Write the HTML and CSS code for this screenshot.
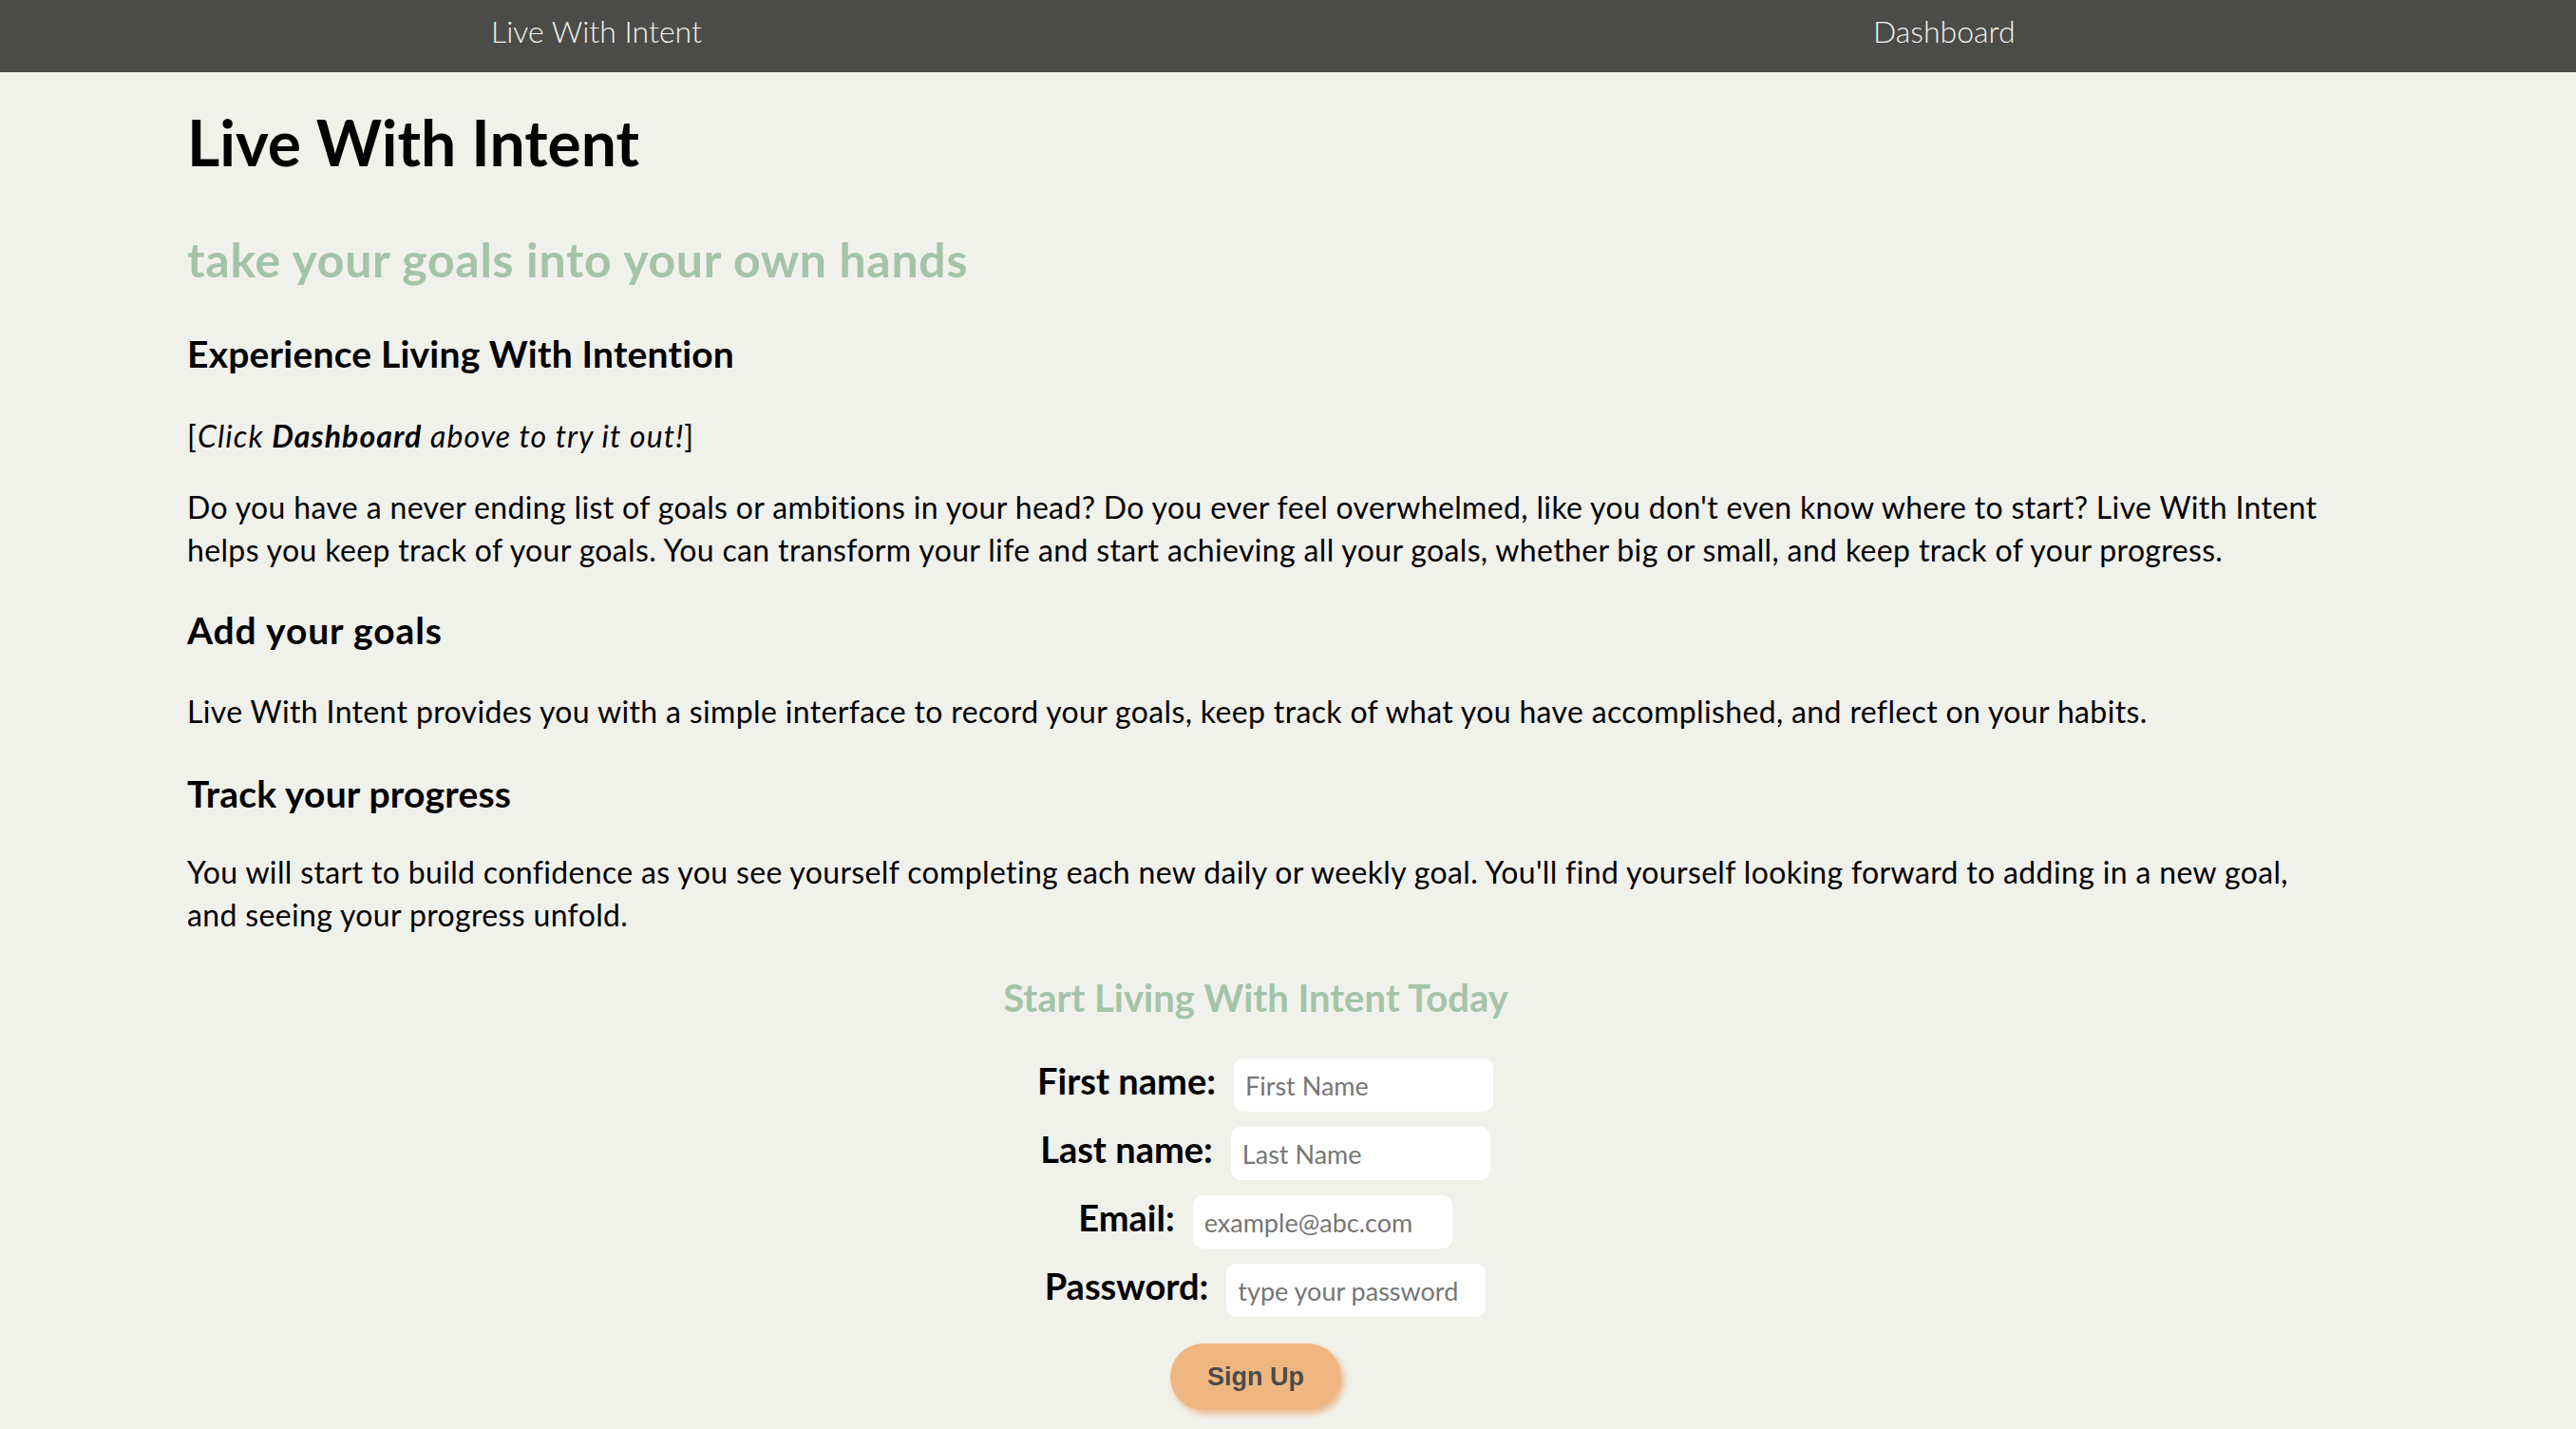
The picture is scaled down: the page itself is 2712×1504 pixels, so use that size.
FILE: index.html
```html
<!DOCTYPE html>
<html lang="en">
<head>
<meta charset="utf-8">
<title>Live With Intent</title>
<link rel="stylesheet" href="styles.css">
</head>
<body>
<nav class="topnav">
  <a class="nav-link nav-brand" href="#">Live With Intent</a>
  <a class="nav-link" href="#">Dashboard</a>
</nav>
<main class="page">
  <h1 class="title">Live With Intent</h1>
  <h2 class="tagline">take your goals into your own hands</h2>
  <h3 class="section-h h-experience">Experience Living With Intention</h3>
  <p class="text note">[<em>Click <strong>Dashboard</strong> above to try it out!</em>]</p>
  <p class="text p-intro">Do you have a never ending list of goals or ambitions in your head? Do you ever feel overwhelmed, like you don't even know where to start? Live With Intent helps you keep track of your goals. You can transform your life and start achieving all your goals, whether big or small, and keep track of your progress.</p>
  <h3 class="section-h h-add">Add your goals</h3>
  <p class="text p-add">Live With Intent provides you with a simple interface to record your goals, keep track of what you have accomplished, and reflect on your habits.</p>
  <h3 class="section-h h-track">Track your progress</h3>
  <p class="text p-track">You will start to build confidence as you see yourself completing each new daily or weekly goal. You'll find yourself looking forward to adding in a new goal, and seeing your progress unfold.</p>
  <section class="signup">
    <h2 class="signup-title">Start Living With Intent Today</h2>
    <form class="signup-form">
      <div class="row"><label class="label" for="fn">First name:</label><input class="field" id="fn" type="text" placeholder="First Name"></div>
      <div class="row"><label class="label" for="ln">Last name:</label><input class="field" id="ln" type="text" placeholder="Last Name"></div>
      <div class="row"><label class="label" for="em">Email:</label><input class="field" id="em" type="email" placeholder="example@abc.com"></div>
      <div class="row"><label class="label" for="pw">Password:</label><input class="field" id="pw" type="password" placeholder="type your password"></div>
      <button class="btn" type="button">Sign Up</button>
    </form>
  </section>
</main>
</body>
</html>
```
FILE: styles.css
```css
html, body {
  margin: 0;
  padding: 0;
}
body {
  background: #f1f1ec;
  color: #000;
  font-family: "Lato", "Noto Sans", sans-serif;
}
.topnav {
  display: flex;
  align-items: center;
  height: 76px;
  background: #4b4b49;
  padding-left: 517px;
  box-sizing: border-box;
}
.nav-link {
  color: #f3f3ee;
  text-decoration: none;
  font-size: 32px;
  font-weight: 300;
  line-height: 76px;
  padding-bottom: 10px;
}
.nav-brand {
  width: 1455px;
}
.page {
  padding: 0 265px 40px 197px;
}
.title {
  margin: 36px 0 0;
  font-size: 66px;
  line-height: 76px;
  font-weight: 700;
}
.tagline {
  margin: 57px 0 0;
  font-size: 50px;
  line-height: 56px;
  font-weight: 700;
  letter-spacing: 0.7px;
  color: #a4c4a7;
}
.section-h {
  margin: 0;
  font-size: 39px;
  line-height: 44px;
  font-weight: 700;
  letter-spacing: 0.2px;
}
.h-experience { margin-top: 49px; }
.h-add { margin-top: 40px; letter-spacing: 0.9px; }
.h-track { margin-top: 42px; }
.text {
  margin: 0;
  font-size: 32px;
  line-height: 45px;
  letter-spacing: 0.35px;
}
.note {
  margin-top: 42px;
  letter-spacing: 1.1px;
}
.p-intro { margin-top: 30px; }
.p-add { margin-top: 41px; }
.p-track { margin-top: 38px; }
.signup {
  display: flex;
  flex-direction: column;
  align-items: center;
}
.signup-title {
  margin: 41px 0 0;
  font-size: 40px;
  line-height: 48px;
  font-weight: 700;
  color: #a4c4a7;
}
.signup-form {
  margin-top: 40px;
  display: flex;
  flex-direction: column;
  align-items: center;
  gap: 16px;
}
.row {
  display: flex;
  align-items: center;
  gap: 19px;
  padding-left: 20px;
}
.label {
  font-size: 38px;
  line-height: 44px;
  font-weight: 700;
  padding-bottom: 10px;
}
.field {
  box-sizing: border-box;
  height: 56px;
  width: 273px;
  border: none;
  border-radius: 10px;
  background: #fff;
  padding: 0 12px;
  font-family: "Lato", "Noto Sans", sans-serif;
  font-size: 27px;
  color: #333;
  outline: none;
}
.field::placeholder {
  color: #767676;
}
.btn {
  margin-top: 12px;
  width: 180px;
  height: 70px;
  border: none;
  border-radius: 35px;
  background: #f0b682;
  color: #4b4b49;
  font-family: "Liberation Sans", Arial, sans-serif;
  font-weight: 700;
  font-size: 27px;
  box-shadow: 3px 4px 6px rgba(228, 138, 60, 0.55);
  cursor: pointer;
}
```
